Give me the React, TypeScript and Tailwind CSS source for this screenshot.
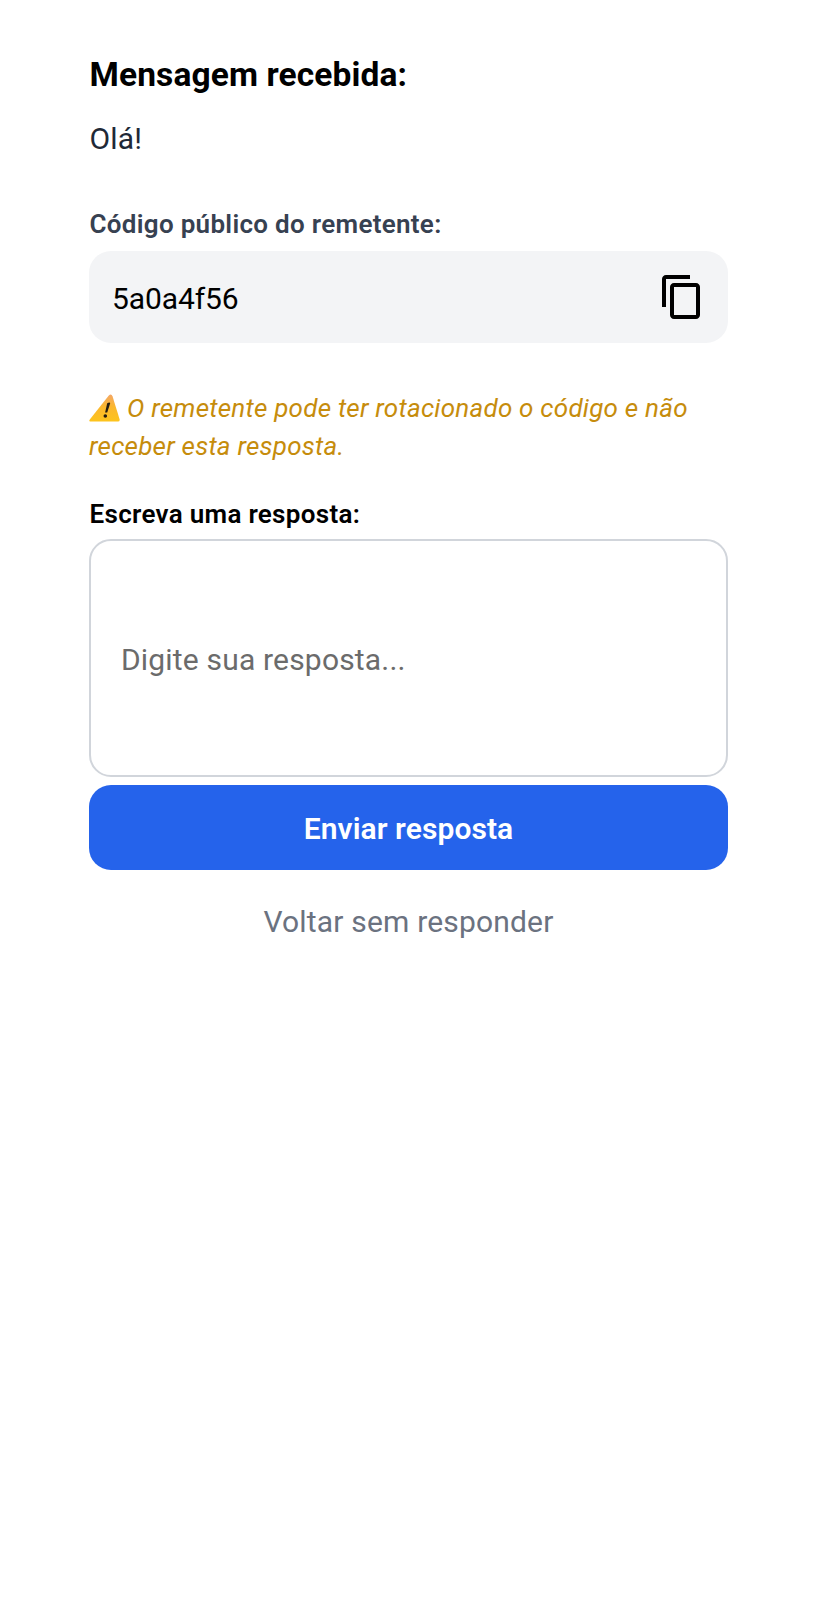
import React from "react";
import { MdContentCopy } from "react-icons/md";

function WarningIcon() {
  return (
    <svg viewBox="0 0 32 28" className="mr-[6px] mb-[-5px] inline-block h-[28px] w-[32px] align-baseline" aria-hidden="true">
      <defs>
        <linearGradient id="warning-fill" x1="0" y1="0" x2="0" y2="1">
          <stop offset="0" stopColor="#f3a765" />
          <stop offset="0.45" stopColor="#fbb72f" />
          <stop offset="1" stopColor="#fdc41c" />
        </linearGradient>
      </defs>
      <path d="M19.600 1.700Q22.300-.8 23.500 2.300L30.600 25.200Q31 27.500 29 27.500H1.200Q-.4 27.500.8 25.400Z" fill="url(#warning-fill)" />
      <path d="M18.200 9.300Q20.800 7.700 21.200 9.300L18.200 18.500H16.100Z" fill="#231c10" />
      <ellipse cx="16.300" cy="22" rx="1.800" ry="1.700" fill="#231c10" />
    </svg>
  );
}

export default function App() {
  return (
    <main className="flex min-h-[1600px] w-full flex-col bg-white px-[89px] pt-[54px] font-['Roboto',sans-serif] text-black">
      <h1 className="pl-[0.5px] text-[33.5px] leading-[42px] font-bold tracking-[0.12px] whitespace-nowrap">Mensagem recebida:</h1>
      <p className="mt-[22px] pl-[0.5px] text-[30px] leading-[42px] tracking-[0.2px] text-[#1f2937]">Olá!</p>
      <h2 className="mt-[46px] pl-[0.5px] text-[26px] leading-[37px] font-semibold tracking-[0.3px] text-[#374151]">Código público do remetente:</h2>
      <div className="mt-[8px] flex h-[92px] items-center justify-between rounded-[22px] bg-gray-100 pr-[22px] pl-[23px]">
        <span className="relative top-[1px] text-[30px] tracking-[-0.1px]">5a0a4f56</span>
        <button aria-label="Copiar código">
          <MdContentCopy className="size-[48px]" />
        </button>
      </div>
      <p className="mt-[46px] text-[26px] leading-[38px] tracking-[0.23px] whitespace-nowrap text-[#c68c0c] italic">
        <WarningIcon />O remetente pode ter rotacionado o código e não<br />receber esta resposta.
      </p>
      <label htmlFor="reply" className="mt-[31px] pl-[0.5px] text-[26px] leading-[37px] font-semibold tracking-[0.3px]">Escreva uma resposta:</label>
      <input id="reply" placeholder="Digite sua resposta..." className="mt-[6px] h-[238px] w-full rounded-[22px] border-2 border-[#d1d5db] px-[30px] pt-[2px] text-[30px] tracking-[0.18px] placeholder:text-[#6b6b6b]" />
      <button className="mt-[8px] h-[85px] rounded-[22px] bg-[#2563eb] pt-[2px] text-[30px] font-semibold tracking-[0.08px] text-white">Enviar resposta</button>
      <button className="mt-[29px] h-[44px] text-[30px] tracking-[0.18px] text-[#6b7280]">Voltar sem responder</button>
    </main>
  );
}
